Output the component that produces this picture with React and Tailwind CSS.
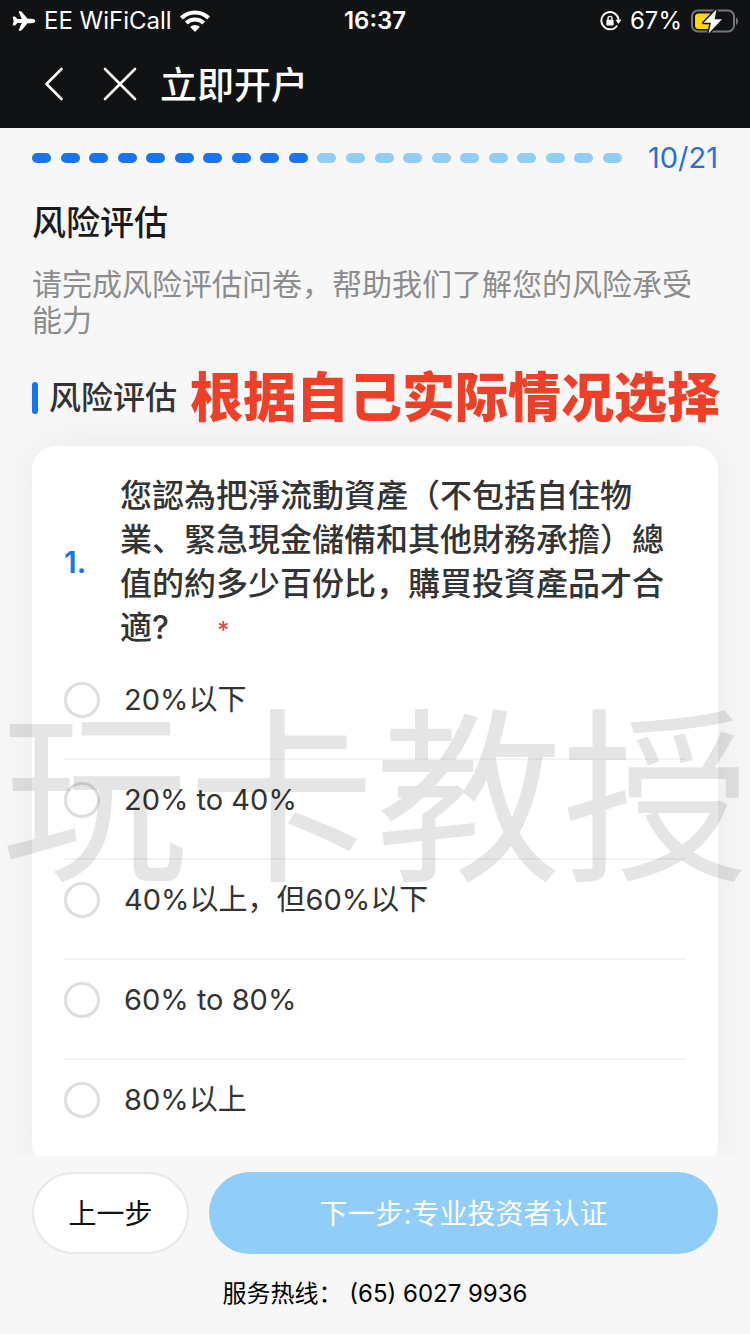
import React, { useState } from 'react';
import { IoAirplane } from 'react-icons/io5';

const TOTAL_STEPS = 21;
const CURRENT_STEP = 10;

const OPTIONS = ['20%以下', '20% to 40%', '40%以上，但60%以下', '60% to 80%', '80%以上'];

function WifiIcon() {
  return (
    <svg width="30" height="22" viewBox="0 0 30 22" fill="none" aria-hidden="true">
      <defs>
        <clipPath id="wifi-wedge">
          <path d="M15 22 L-1.5 5 L0 0 H30 L31.5 5 Z" />
        </clipPath>
      </defs>
      <g clipPath="url(#wifi-wedge)" stroke="#fff" strokeWidth="4">
        <circle cx="15" cy="22" r="19.5" />
        <circle cx="15" cy="22" r="12.5" />
        <circle cx="15" cy="22" r="3.5" strokeWidth="7" />
      </g>
    </svg>
  );
}

function RotationLockIcon() {
  return (
    <svg width="22" height="20" viewBox="0 0 22 20" fill="none" aria-hidden="true">
      <path d="M17.2 14.400A8.600 8.600 0 1 1 18.600 9.500" stroke="#fff" strokeWidth="1.9" />
      <path d="M15.4 8.8H21.4L18.4 13Z" fill="#fff" />
      <rect x="6.4" y="8.8" width="7.2" height="5.8" rx="1" fill="#fff" />
      <path d="M8 9V7.4a2 2 0 0 1 4 0V9" stroke="#fff" strokeWidth="1.4" />
    </svg>
  );
}

function BatteryIcon() {
  return (
    <svg width="48" height="26" viewBox="0 0 48 26" fill="none" aria-hidden="true">
      <rect x="2" y="2.5" width="42" height="21" rx="6" stroke="#75767a" strokeWidth="2" />
      <path d="M46 9.5v7.5c1.4-.6 2-2 2-3.700S47.400 10.100 46 9.500Z" fill="#75767a" />
      <path d="M8.500 5.500H24L19 21H8.500A3.500 3.500 0 0 1 5 17.500V9A3.500 3.500 0 0 1 8.500 5.500Z" fill="#fcd60a" />
      <path d="M26.600 1.200 13.600 14.800h7.400L18.600 25.400 32 11.200H24.600Z" fill="#fff" stroke="#111213" strokeWidth="3" strokeLinejoin="round" paintOrder="stroke" />
    </svg>
  );
}

function StatusBar() {
  return (
    <div className="grid h-10 grid-cols-[1fr_auto_1fr] items-center px-3 pt-px text-2xl">
      <div className="flex items-center gap-2">
        <IoAirplane size={24} />
        <span>EE WiFiCall</span>
        <WifiIcon />
      </div>
      <span className="font-semibold">16:37</span>
      <div className="flex items-center justify-end gap-2">
        <RotationLockIcon />
        <span>67%</span>
        <BatteryIcon />
      </div>
    </div>
  );
}

function NavBar() {
  return (
    <div className="flex h-[88px] items-center pl-10">
      <button type="button" aria-label="返回" className="flex h-11 w-7 items-center justify-center">
        <svg width="20" height="34" viewBox="0 0 20 34" fill="none" stroke="#fff" strokeWidth="2.6" strokeLinecap="round" strokeLinejoin="round">
          <path d="M17.5 2 2.5 17 17.5 32" />
        </svg>
      </button>
      <button type="button" aria-label="关闭" className="ml-8 flex h-11 w-10 items-center justify-center">
        <svg width="34" height="34" viewBox="0 0 34 34" fill="none" stroke="#fff" strokeWidth="2.6" strokeLinecap="round">
          <path d="M2 2 32 32M32 2 2 32" />
        </svg>
      </button>
      <h1 className="ml-5 pt-1 text-[37px] font-medium">立即开户</h1>
    </div>
  );
}

function Progress() {
  return (
    <div className="flex h-[60px] items-center gap-[26px]">
      <div className="flex flex-1 justify-between">
        {Array.from({ length: TOTAL_STEPS }, (_, i) => (
          <span
            key={i}
            className={`h-[10px] w-[19px] rounded-full ${i < CURRENT_STEP ? 'bg-[#1a74ec]' : 'bg-[#92cdf5]'}`}
          />
        ))}
      </div>
      <span className="text-[29px] leading-9 text-[#2a6fd6]">{CURRENT_STEP}/{TOTAL_STEPS}</span>
    </div>
  );
}

function Option({ label, checked, onSelect }) {
  return (
    <label className="flex h-[100px] items-center gap-6 border-b-2 border-[#f4f4f4] pb-[18px] text-[29px] leading-9 last:border-transparent">
      <input
        type="radio"
        name="ratio"
        checked={checked}
        onChange={onSelect}
        className="size-9 shrink-0 appearance-none rounded-full border-[3px] border-[#dedede] bg-white checked:border-[10px] checked:border-[#1a74ec]"
      />
      {label}
    </label>
  );
}

export default function App() {
  const [answer, setAnswer] = useState(null);

  return (
    <div className="relative flex h-dvh flex-col overflow-hidden bg-[#f7f7f7] font-['Inter','Noto_Sans_CJK_SC',sans-serif] text-[#333]">
      <header className="bg-[#111213] text-white">
        <StatusBar />
        <NavBar />
      </header>

      <div className="px-8 pb-5">
        <Progress />
        <h2 className="mt-[9px] text-[34px] font-medium leading-[52px] text-[#1a1a1a]">风险评估</h2>
        <p className="mt-[17px] text-[30px] leading-9 text-[#8c8c8c]">请完成风险评估问卷，帮助我们了解您的风险承受能力</p>
      </div>

      <main className="min-h-0 flex-1 overflow-hidden px-7">
        <div className="flex h-[88px] items-center gap-[11px] pl-1 pt-2 pb-4 whitespace-nowrap">
          <span className="h-8 w-[6px] shrink-0 rounded-full bg-[#1a74ec]" />
          <h3 className="text-[32px] font-medium">风险评估</h3>
          <strong className="ml-0.5 text-[53px] leading-[60px] font-black text-[#ee4028]">根据自己实际情况选择</strong>
        </div>

        <fieldset className="mx-1 rounded-3xl bg-white px-8 pt-7 pb-2 shadow-[0_0_40px_rgba(0,0,0,0.055)]">
          <div className="flex items-center">
            <span className="w-14 shrink-0 text-[30px] font-semibold text-[#1a74ec]">1.</span>
            <p className="text-[32px] leading-[44px] font-medium">
              您認為把淨流動資產（不包括自住物業、緊急現金儲備和其他財務承擔）總值的約多少百份比，購買投資產品才合適?
              <span className="ml-12 text-2xl leading-none text-[#e5484d]">*</span>
            </p>
          </div>
          <div className="mt-[10px]">
            {OPTIONS.map((label) => (
              <Option key={label} label={label} checked={answer === label} onSelect={() => setAnswer(label)} />
            ))}
          </div>
        </fieldset>
      </main>

      <footer className="h-[178px] shrink-0 bg-[#f7f7f7] px-8 pt-4">
        <div className="flex h-[82px] gap-5">
          <button type="button" className="w-[157px] rounded-full border-2 border-[#e8e8e8] bg-white pt-0.5 text-[28px] text-[#111]">
            上一步
          </button>
          <button type="button" className="flex-1 rounded-full bg-[#90cdf9] pt-0.5 text-[28px] text-white">
            下一步:专业投资者认证
          </button>
        </div>
        <p className="mt-[22px] text-center text-2xl leading-9 text-black">
          服务热线： <a href="tel:+6560279936">(65) 6027 9936</a>
        </p>
      </footer>

      <div className="pointer-events-none absolute inset-x-0 top-[706px] text-center text-[187px] leading-[187px] whitespace-nowrap text-black/10">
        玩卡教授
      </div>
    </div>
  );
}
